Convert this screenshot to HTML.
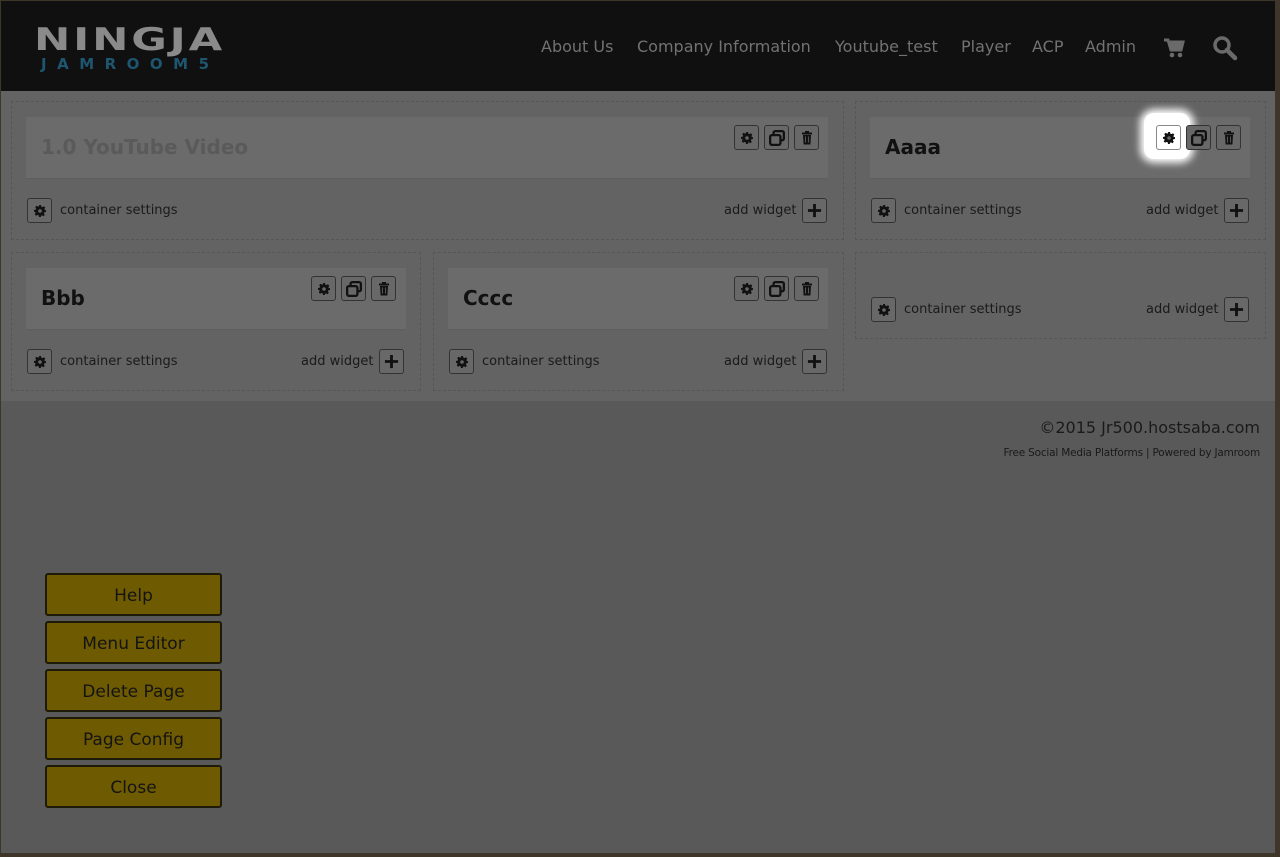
<!DOCTYPE html>
<html><head><meta charset="utf-8">
<style>
*{margin:0;padding:0;box-sizing:border-box}
html,body{width:1280px;height:857px;overflow:hidden}
body{background:#3e3628;font-family:"DejaVu Sans","Liberation Sans",sans-serif;position:relative}
#page{position:absolute;left:1px;top:1px;width:1274px;height:852px;background:#595959}
#hdr{position:absolute;left:0;top:0;width:1274px;height:90px;background:#101010}
#main{position:absolute;left:0;top:90px;width:1274px;height:310px;background:#636363}
.abs{position:absolute}
.nav{position:absolute;top:36px;font-size:16px;color:#727272;white-space:nowrap}
.box{position:absolute;border:1px dashed #565656}
.wh{position:absolute;background:#6b6b6b;border-bottom:1px solid #5e5e5e}
.wh h2{position:absolute;left:15px;top:18px;font-size:20px;font-weight:bold;color:#111}
.ib{position:absolute;width:25px;height:25px;border:1px solid #333;border-radius:3px;background:#686868;display:flex;align-items:center;justify-content:center}
.lbl{position:absolute;font-size:13px;color:#1a1a1a;white-space:nowrap}
.btn{position:absolute;left:44px;width:177px;height:43px;background:#6e5a00;border:2px solid #1e1a08;border-radius:3px;color:#141414;font-size:17px;text-align:center;line-height:42px}
</style></head><body>
<div id="page">
<div id="hdr">
  <div class="abs" style="left:33px;top:22px;font-family:'DejaVu Sans',sans-serif;font-weight:bold;font-size:31px;letter-spacing:2px;color:#8a8a8a;transform:scaleX(1.4);transform-origin:left;line-height:34px">NINGJA</div>
  <div class="abs" style="left:40px;top:55px;font-weight:bold;font-size:15px;letter-spacing:10.5px;color:#1e5670;line-height:16px">JAMROOM5</div>
  <div class="nav" style="left:540px">About Us</div>
  <div class="nav" style="left:636px">Company Information</div>
  <div class="nav" style="left:834px">Youtube_test</div>
  <div class="nav" style="left:960px">Player</div>
  <div class="nav" style="left:1031px">ACP</div>
  <div class="nav" style="left:1084px">Admin</div>
  <svg class="abs" style="left:1162px;top:37px" width="22" height="21" viewBox="0 0 22 21"><path d="M1 2h4l3 10h10l2-8H7" fill="none" stroke="#6a6a6a" stroke-width="3"/><rect x="7" y="5" width="11" height="6" fill="#6a6a6a"/><circle cx="9" cy="17" r="2.3" fill="#6a6a6a"/><circle cx="17" cy="17" r="2.3" fill="#6a6a6a"/></svg>
  <svg class="abs" style="left:1211px;top:34px" width="26" height="26" viewBox="0 0 26 26"><circle cx="10" cy="10" r="7" fill="none" stroke="#6a6a6a" stroke-width="3.5"/><path d="M15 15l8 8" stroke="#6a6a6a" stroke-width="4.5" stroke-linecap="round"/></svg>
</div>
<div id="main"></div>

<div class="box" style="left:10px;top:100px;width:833px;height:139px"></div>
<div class="box" style="left:854px;top:100px;width:411px;height:139px"></div>
<div class="box" style="left:10px;top:251px;width:410px;height:139px"></div>
<div class="box" style="left:432px;top:251px;width:411px;height:139px"></div>
<div class="box" style="left:854px;top:251px;width:411px;height:87px"></div>

<div class="wh" style="left:25px;top:116px;width:802px;height:62px"><h2 style="color:#5a5a5a">1.0 YouTube Video</h2></div>
<div class="wh" style="left:869px;top:116px;width:380px;height:62px"><h2>Aaaa</h2></div>
<div class="wh" style="left:25px;top:267px;width:380px;height:62px"><h2>Bbb</h2></div>
<div class="wh" style="left:447px;top:267px;width:380px;height:62px"><h2>Cccc</h2></div>

<svg width="0" height="0" style="position:absolute"><defs>
<symbol id="g" viewBox="0 0 12 12"><path d="M5 0h2l.3 1.6 1.2.5 1.4-.9 1.4 1.4-.9 1.4.5 1.2L12 5v2l-1.6.3-.5 1.2.9 1.4-1.4 1.4-1.4-.9-1.2.5L7 12H5l-.3-1.6-1.2-.5-1.4.9-1.4-1.4.9-1.4-.5-1.2L0 7V5l1.6-.3.5-1.2-.9-1.4 1.4-1.4 1.4.9 1.2-.5z" fill="#111"/><circle cx="6" cy="6" r="1.8" fill="#686868"/></symbol>
<symbol id="c" viewBox="0 0 14 14"><rect x="4" y="1" width="9" height="8" rx="1.5" fill="none" stroke="#111" stroke-width="2"/><rect x="1" y="4.5" width="9" height="8.5" rx="1.5" fill="#686868" stroke="#111" stroke-width="2"/></symbol>
<symbol id="t" viewBox="0 0 12 14"><rect x="1" y="1.5" width="10" height="2" fill="#111"/><rect x="4" y="0" width="4" height="2" fill="#111"/><path d="M2 4h8l-.6 9.5H2.6z" fill="#111"/><path d="M4.5 5.5v6M7.5 5.5v6" stroke="#686868" stroke-width=".8"/></symbol>
<symbol id="p" viewBox="0 0 16 16"><path d="M8 1v14M1 8h14" stroke="#111" stroke-width="3"/></symbol>
</defs></svg>

<div class="ib" style="left:733px;top:124px"><svg width="12" height="12"><use href="#g"/></svg></div>
<div class="ib" style="left:763px;top:124px"><svg width="16" height="16"><use href="#c"/></svg></div>
<div class="ib" style="left:793px;top:124px"><svg width="12" height="14"><use href="#t"/></svg></div>

<div class="abs" style="left:1143px;top:112px;width:46px;height:46px;border-radius:10px;background:#fff;box-shadow:0 0 8px 4px #fff"></div>
<div class="ib" style="left:1155px;top:124px;background:#fff;border-color:#888"><svg width="12" height="12"><use href="#g"/></svg></div>
<div class="ib" style="left:1185px;top:124px"><svg width="16" height="16"><use href="#c"/></svg></div>
<div class="ib" style="left:1215px;top:124px"><svg width="12" height="14"><use href="#t"/></svg></div>

<div class="ib" style="left:310px;top:275px"><svg width="12" height="12"><use href="#g"/></svg></div>
<div class="ib" style="left:340px;top:275px"><svg width="16" height="16"><use href="#c"/></svg></div>
<div class="ib" style="left:370px;top:275px"><svg width="12" height="14"><use href="#t"/></svg></div>

<div class="ib" style="left:733px;top:275px"><svg width="12" height="12"><use href="#g"/></svg></div>
<div class="ib" style="left:763px;top:275px"><svg width="16" height="16"><use href="#c"/></svg></div>
<div class="ib" style="left:793px;top:275px"><svg width="12" height="14"><use href="#t"/></svg></div>

<div class="ib" style="left:26px;top:197px"><svg width="12" height="12"><use href="#g"/></svg></div><div class="lbl" style="left:59px;top:202px">container settings</div>
<div class="lbl" style="left:723px;top:202px">add widget</div><div class="ib" style="left:801px;top:197px"><svg width="15" height="15"><use href="#p"/></svg></div>

<div class="ib" style="left:870px;top:197px"><svg width="12" height="12"><use href="#g"/></svg></div><div class="lbl" style="left:903px;top:202px">container settings</div>
<div class="lbl" style="left:1145px;top:202px">add widget</div><div class="ib" style="left:1223px;top:197px"><svg width="15" height="15"><use href="#p"/></svg></div>

<div class="ib" style="left:26px;top:348px"><svg width="12" height="12"><use href="#g"/></svg></div><div class="lbl" style="left:59px;top:353px">container settings</div>
<div class="lbl" style="left:300px;top:353px">add widget</div><div class="ib" style="left:378px;top:348px"><svg width="15" height="15"><use href="#p"/></svg></div>

<div class="ib" style="left:448px;top:348px"><svg width="12" height="12"><use href="#g"/></svg></div><div class="lbl" style="left:481px;top:353px">container settings</div>
<div class="lbl" style="left:723px;top:353px">add widget</div><div class="ib" style="left:801px;top:348px"><svg width="15" height="15"><use href="#p"/></svg></div>

<div class="ib" style="left:870px;top:296px"><svg width="12" height="12"><use href="#g"/></svg></div><div class="lbl" style="left:903px;top:301px">container settings</div>
<div class="lbl" style="left:1145px;top:301px">add widget</div><div class="ib" style="left:1223px;top:296px"><svg width="15" height="15"><use href="#p"/></svg></div>

<div class="abs" style="right:15px;top:417px;font-size:16px;color:#1a1a1a">©2015 Jr500.hostsaba.com</div>
<div class="abs" style="right:15px;top:446px;font-size:10.5px;color:#1a1a1a;letter-spacing:-.2px">Free Social Media Platforms | Powered by Jamroom</div>

<div class="btn" style="top:572px">Help</div>
<div class="btn" style="top:620px">Menu Editor</div>
<div class="btn" style="top:668px">Delete Page</div>
<div class="btn" style="top:716px">Page Config</div>
<div class="btn" style="top:764px">Close</div>
</div>
</body></html>
